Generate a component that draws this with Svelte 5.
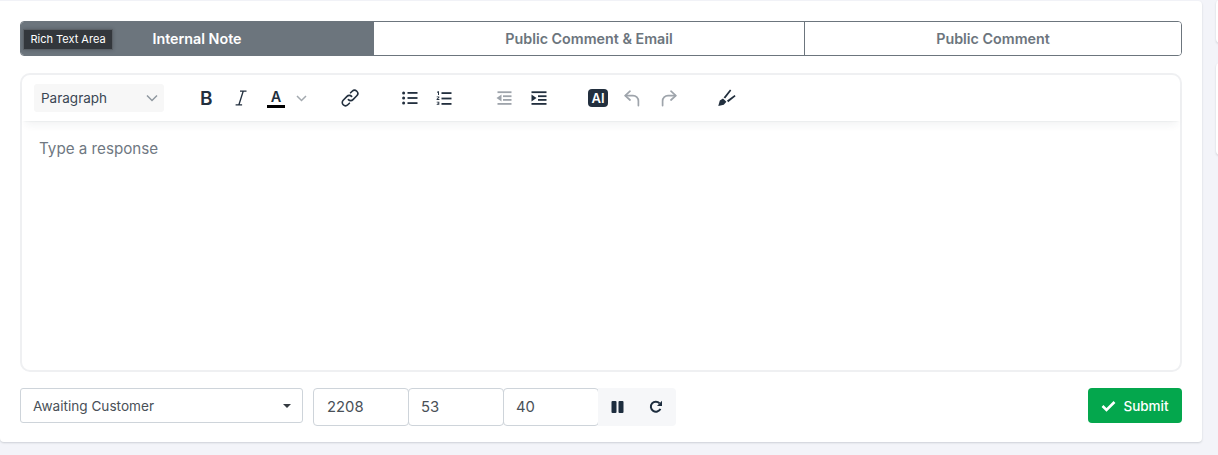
<script>
  const tabs = ['Internal Note', 'Public Comment & Email', 'Public Comment'];
</script>

<div class="page">
  <section class="card">
    <div class="tabs">
      {#each tabs as tab, i}
        <button class="tab" class:active={i === 0} class:t1={i === 0} class:t2={i === 1} class:t3={i === 2}>{tab}</button>
      {/each}
      <div class="tip">Rich Text Area</div>
    </div>

    <div class="editor">
      <div class="toolbar">
        <div class="para"><span>Paragraph</span>
          <svg width="12" height="8" viewBox="0 0 12 8"><path d="M1 1.5 6 6.5 11 1.5" fill="none" stroke="#8f979f" stroke-width="1.5"/></svg>
        </div>
        <div class="group g1">
          <span class="ic b">B</span>
          <svg class="italic" width="12" height="16" viewBox="0 0 12 16"><path d="M5 1.2h6.5M.6 14.8h6.5M8.2 1.2 3.9 14.8" fill="none" stroke="#222f3e" stroke-width="1.3"/></svg>
          <span class="color"><span class="a">A</span><span class="bar"></span></span>
          <svg class="caret" width="11" height="7" viewBox="0 0 11 7"><path d="M1 1 5.5 5.5 10 1" fill="none" stroke="#a3a9af" stroke-width="1.5"/></svg>
        </div>
        <svg class="link" width="18" height="18" viewBox="0 0 18 18" fill="none" stroke="#222f3e" stroke-width="1.6" stroke-linecap="round">
          <path d="M7.4 10.6a3.2 3.2 0 0 0 4.6 0l3.8-3.8a3.2 3.2 0 0 0-4.6-4.6L9.6 3.8"/>
          <path d="M10.6 7.4a3.2 3.2 0 0 0-4.6 0l-3.8 3.8a3.2 3.2 0 0 0 4.6 4.6l1.6-1.6"/>
        </svg>
        <svg class="bul" width="16" height="14" viewBox="0 0 16 14" fill="#222f3e">
          <circle cx="1.6" cy="2" r="1.5"/><circle cx="1.6" cy="7" r="1.5"/><circle cx="1.6" cy="12" r="1.5"/>
          <rect x="5.5" y="1" width="10" height="1.8"/><rect x="5.5" y="6.1" width="10" height="1.8"/><rect x="5.5" y="11.2" width="10" height="1.8"/>
        </svg>
        <svg class="num" width="16" height="15" viewBox="0 0 16 15" fill="#222f3e">
          <path d="M1 .8 2.4.3H3v3.6h-1V1.5l-1 .3z"/>
          <path d="M.7 5.6h2.6v1.1L1.8 8.1h1.6v.8H.6v-.8l1.7-1.7v-.1H.7z"/>
          <path d="M.7 10.8h2.6v2.9H.7v-.7h1.7v-.4H1.2v-.7h1.2v-.4H.7z"/>
          <rect x="5.5" y="1.2" width="10" height="1.8"/><rect x="5.5" y="6.6" width="10" height="1.8"/><rect x="5.5" y="12" width="10" height="1.8"/>
        </svg>
        <svg class="out" width="16" height="14" viewBox="0 0 16 14" fill="#9ea4ab">
          <rect x="1.5" y="0.3" width="14" height="1.8"/><rect x="7" y="4.3" width="8.5" height="1.8"/><rect x="7" y="8" width="8.5" height="1.8"/><rect x="1.5" y="12" width="14" height="1.8"/>
          <path d="M0.5 7 5.5 3.6v6.8z"/>
        </svg>
        <svg class="in" width="16" height="14" viewBox="0 0 16 14" fill="#222f3e">
          <rect x="0.5" y="0.3" width="15" height="1.8"/><rect x="7" y="4.3" width="8.5" height="1.8"/><rect x="7" y="8" width="8.5" height="1.8"/><rect x="0.5" y="12" width="15" height="1.8"/>
          <path d="M5.5 7 0.5 3.6v6.8z"/>
        </svg>
        <span class="ai">AI</span>
        <svg class="undo" width="16" height="17" viewBox="0 0 16 17" fill="none" stroke="#9ea4ab" stroke-width="1.7" stroke-linecap="round" stroke-linejoin="round"><path d="M6 1.2 1.2 5.6 6 10"/><path d="M1.5 5.6h7.5a5.4 5.4 0 0 1 5.4 5.4V15.6"/></svg>
        <svg class="redo" width="16" height="17" viewBox="0 0 16 17" fill="none" stroke="#9ea4ab" stroke-width="1.7" stroke-linecap="round" stroke-linejoin="round"><path d="M10 1.2 14.8 5.6 10 10"/><path d="M14.5 5.6H7a5.4 5.4 0 0 0-5.4 5.4V15.6"/></svg>
        <svg class="brush" width="18" height="18" viewBox="0 0 18 18" fill="#222f3e">
          <path d="M0.3 17 1.8 11.6 5 9.4l3.4 3.4-2.6 3z"/>
          <path d="M5.6 8.4 12 0.4l1.3 1L7.2 9.6zM9 11.6l7.6-5.6 1 1.2-7.4 6z"/>
        </svg>
      </div>
      <div class="body">Type a response</div>
    </div>

    <div class="footer">
      <div class="select"><span>Awaiting Customer</span><i class="tri"></i></div>
      <div class="timer">
        <div class="num-in w1">2208</div>
        <div class="num-in w2">53</div>
        <div class="num-in w3">40</div>
        <div class="ctl">
          <svg width="14" height="12" viewBox="0 0 14 12" fill="#1d2d3e"><rect x="0.5" y="0" width="5" height="12" rx="1"/><rect x="7.5" y="0" width="5" height="12" rx="1"/></svg>
          <svg width="14" height="14" viewBox="0 0 14 14" fill="none"><path d="M11.4 8.8A5 5 0 1 1 10.6 3.4" stroke="#1d2d3e" stroke-width="2"/><path d="M13 .8V6H8z" fill="#1d2d3e"/></svg>
        </div>
      </div>
      <button class="submit">
        <svg width="15" height="12" viewBox="0 0 15 12"><path d="M1.5 6 5.5 10 13.5 2" fill="none" stroke="#fff" stroke-width="2.6"/></svg>
        Submit
      </button>
    </div>
  </section>
  <aside class="side">
    <div class="stub s1"></div>
    <div class="stub s2"></div>
  </aside>
</div>

<style>
  :global(body) {
    margin: 0;
    background: #f3f4f9;
    overflow: hidden;
  }
  .page {
    display: flex;
    align-items: flex-start;
    width: 1218px;
    height: 455px;
    font-family: Inter, "Noto Sans", sans-serif;
    overflow: hidden;
  }
  .card {
    flex: 0 0 1202px;
    box-sizing: border-box;
    height: 441px;
    margin-top: 1px;
    padding: 20px 20px 0;
    background: #fff;
    border-radius: 0 4px 4px 4px;
    box-shadow: 0 1px 2px rgba(56, 65, 74, 0.2);
  }
  .tabs {
    position: relative;
    display: flex;
    box-sizing: border-box;
    height: 35px;
    border: 1px solid #6c757d;
    border-radius: 4px;
    overflow: hidden;
  }
  .tab {
    padding: 0;
    border: 0;
    background: #fff;
    color: #6c757d;
    font: 600 14.3px Inter, sans-serif;
  }
  .t1 { flex: 0 0 352px; }
  .t2 { flex: 0 0 431px; border-left: 1px solid #6c757d; }
  .t3 { flex: 1; border-left: 1px solid #6c757d; }
  .active {
    background: #6c757d;
    color: #fff;
  }
  .tip {
    position: absolute;
    left: 2px;
    top: 7px;
    box-sizing: border-box;
    width: 90px;
    height: 21px;
    background: #33373c;
    border: 1px solid #5a6066;
    color: #fff;
    font-size: 11px;
    line-height: 19px;
    text-align: center;
    box-shadow: 0 0 4px rgba(0, 0, 0, 0.2);
  }
  .editor {
    box-sizing: border-box;
    height: 299px;
    margin-top: 17px;
    border: 2px solid #eff0f2;
    border-radius: 10px;
  }
  .toolbar {
    position: relative;
    display: flex;
    align-items: center;
    box-sizing: border-box;
    height: 46px;
    padding-left: 12px;
    box-shadow: 0 2px 2px -2px rgba(34, 47, 62, 0.1), 0 8px 8px -4px rgba(34, 47, 62, 0.06);
    color: #222f3e;
  }
  .para {
    display: flex;
    align-items: center;
    justify-content: space-between;
    box-sizing: border-box;
    width: 130px;
    height: 28px;
    padding: 0 6px 0 7px;
    background: #f7f7f7;
    border-radius: 3px;
    font-size: 13.5px;
    color: #3a4654;
  }
  .group { display: flex; align-items: center; }
  .g1 { margin-left: 36px; width: 123px; }
  .ic.b { font-size: 19px; font-weight: 600; width: 13px; }
  .italic { margin-left: 22px; }
  .color {
    position: relative;
    display: flex;
    flex-direction: column;
    align-items: center;
    width: 18px;
    margin-left: 20px;
  }
  .a { font-size: 14.5px; font-weight: 600; line-height: 15px; }
  .bar { width: 18px; height: 3px; background: #000; margin-top: 1px; }
  .caret { margin-left: 11px; }
  .link { margin-left: 18px; }
  .bul { margin-left: 43px; }
  .num { margin-left: 18px; }
  .out { margin-left: 44px; }
  .in { margin-left: 19px; }
  .ai {
    margin-left: 41px;
    width: 20px;
    height: 18px;
    border-radius: 4px;
    background: #222f3e;
    color: #fff;
    font-size: 13px;
    font-weight: 600;
    line-height: 18px;
    text-align: center;
  }
  .undo { margin-left: 16px; }
  .redo { margin-left: 21px; }
  .brush { margin-left: 41px; }
  .body {
    padding: 18px 17px;
    font-size: 15.2px;
    line-height: 20px;
    color: #6f7882;
  }
  .footer {
    display: flex;
    align-items: flex-start;
    margin-top: 16px;
  }
  .select {
    display: flex;
    align-items: center;
    justify-content: space-between;
    box-sizing: border-box;
    width: 283px;
    height: 35px;
    padding: 0 12px;
    border: 1px solid #ced4da;
    border-radius: 3px;
    font-size: 13.6px;
    color: #495057;
  }
  .tri {
    margin-right: -1px;
    border-left: 4px solid transparent;
    border-right: 4px solid transparent;
    border-top: 4px solid #343a40;
  }
  .timer { display: flex; margin-left: 10px; }
  .num-in {
    box-sizing: border-box;
    height: 38px;
    border: 1px solid #ced4da;
    border-radius: 4px;
    margin-right: -1px;
    font-size: 14.8px;
    line-height: 36px;
    color: #495057;
  }
  .w1 { width: 96px; padding-left: 13px; }
  .w2, .w3 { width: 96px; padding-left: 12px; }
  .ctl {
    display: flex;
    align-items: center;
    gap: 24px;
    box-sizing: border-box;
    width: 78px;
    height: 38px;
    padding-left: 13px;
    background: #f6f7f9;
    border-radius: 0 4px 4px 0;
  }
  .submit {
    display: flex;
    align-items: center;
    justify-content: center;
    gap: 7px;
    margin-left: auto;
    box-sizing: border-box;
    width: 94px;
    height: 35px;
    border: 0;
    border-radius: 4px;
    background: #04a74d;
    color: #fff;
    font: 500 13.5px Inter, sans-serif;
  }
  .side {
    display: flex;
    flex-direction: column;
    gap: 20px;
    margin-left: 14px;
  }
  .stub {
    width: 20px;
    background: #fff;
    border-radius: 4px;
    box-shadow: 0 1px 2px rgba(56, 65, 74, 0.2);
  }
  .s1 { height: 43px; }
  .s2 { height: 92px; }
</style>
